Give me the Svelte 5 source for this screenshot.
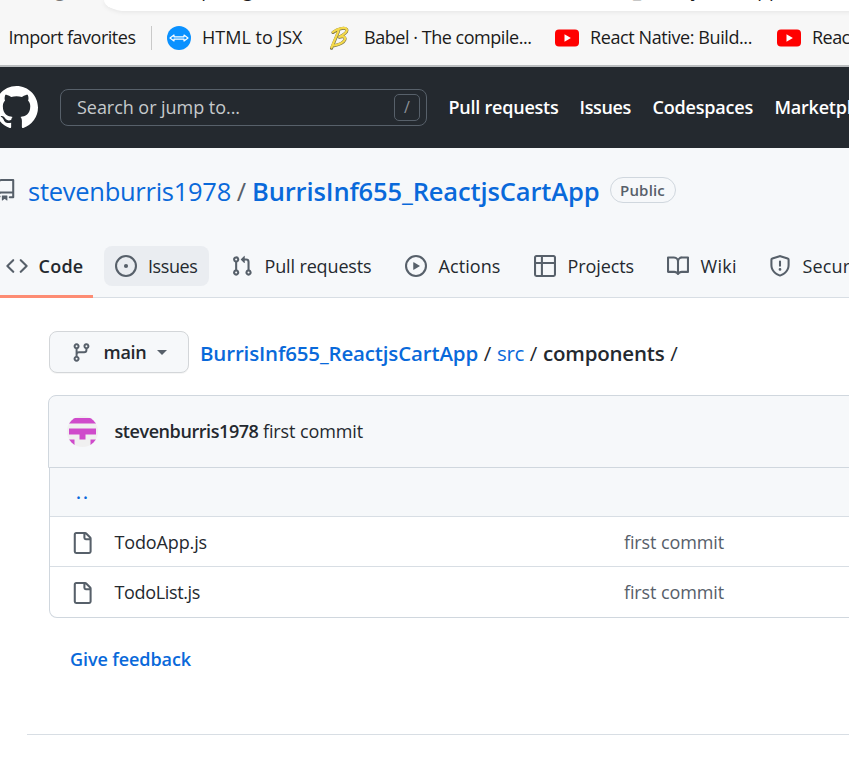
<script>
  // Spreads a label's letters so that it fills exactly the given width.
  function fit(node, width) {
    const natural = node.getBoundingClientRect().width;
    const count = node.textContent.length;
    node.style.letterSpacing = `${(width - natural) / count}px`;
    node.style.width = `${width}px`;
  }

  const favorites = [
    { kind: 'jsx', label: 'HTML to JSX', text: 100.5, slot: 162 },
    { kind: 'babel', label: 'Babel · The compile...', text: 167.5, slot: 226 },
    { kind: 'youtube', label: 'React Native: Build...', text: 162, slot: 222 },
    { kind: 'youtube', label: 'React Native', text: 98, slot: 200 }
  ];

  const links = [
    { label: 'Pull requests', text: 110, slot: 131 },
    { label: 'Issues', text: 51.5, slot: 73 },
    { label: 'Codespaces', text: 100.5, slot: 122 },
    { label: 'Marketplace', text: 106, slot: 120 }
  ];

  const tabs = [
    {
      label: 'Code', text: 45, slot: 99, state: 'current',
      d: 'M4.72 3.22a.75.75 0 011.06 1.06L2.06 8l3.72 3.72a.75.75 0 11-1.06 1.06L.47 8.53a.75.75 0 010-1.06l4.25-4.25zm6.56 0a.75.75 0 10-1.06 1.06L13.94 8l-3.72 3.72a.75.75 0 101.06 1.06l4.25-4.25a.75.75 0 000-1.06l-4.25-4.25z'
    },
    {
      label: 'Issues', text: 49.5, slot: 105, state: 'hovered',
      d: 'M8 9.5a1.5 1.5 0 100-3 1.5 1.5 0 000 3zM8 0a8 8 0 100 16A8 8 0 008 0zM1.5 8a6.5 6.5 0 1113 0 6.5 6.5 0 01-13 0z'
    },
    {
      label: 'Pull requests', text: 107, slot: 163,
      d: 'M7.177 3.073L9.573.677A.25.25 0 0110 .854v4.792a.25.25 0 01-.427.177L7.177 3.427a.25.25 0 010-.354zM3.75 2.5a.75.75 0 100 1.5.75.75 0 000-1.5zm-2.25.75a2.25 2.25 0 113 2.122v5.256a2.251 2.251 0 11-1.5 0V5.372A2.25 2.25 0 011.5 3.25zM11 2.5h-1V4h1a1 1 0 011 1v5.628a2.251 2.251 0 101.5 0V5A2.5 2.5 0 0011 2.5zm1 10.25a.75.75 0 111.5 0 .75.75 0 01-1.5 0zM3.75 12a.75.75 0 100 1.5.75.75 0 000-1.5z'
    },
    {
      label: 'Actions', text: 62, slot: 118,
      d: 'M1.5 8a6.5 6.5 0 1113 0 6.5 6.5 0 01-13 0zM8 0a8 8 0 100 16A8 8 0 008 0zM6.379 5.227A.25.25 0 006 5.442v5.117a.25.25 0 00.379.214l4.264-2.559a.25.25 0 000-.428L6.379 5.227z'
    },
    {
      label: 'Projects', text: 66.5, slot: 122,
      d: 'M0 1.75C0 .784.784 0 1.75 0h12.5C15.216 0 16 .784 16 1.75v12.5A1.75 1.75 0 0114.25 16H1.75A1.75 1.75 0 010 14.25V1.75zM1.5 6.5v7.75c0 .138.112.25.25.25H5v-8H1.5zM5 5V1.5H1.75a.25.25 0 00-.25.25V5H5zm1.5 1.5v8h7.75a.25.25 0 00.25-.25V6.5h-8zm8-1.5V1.75a.25.25 0 00-.25-.25H6.5V5h8z'
    },
    {
      label: 'Wiki', text: 36.5, slot: 91,
      d: 'M0 1.75A.75.75 0 01.75 1h4.253c1.227 0 2.317.59 3 1.501A3.744 3.744 0 0111.006 1h4.245a.75.75 0 01.75.75v10.5a.75.75 0 01-.75.75h-4.507a2.25 2.25 0 00-1.591.659l-.622.621a.75.75 0 01-1.06 0l-.622-.621A2.25 2.25 0 005.258 13H.75a.75.75 0 01-.75-.75V1.75zm8.755 3a2.25 2.25 0 012.25-2.25H14.5v9h-3.757c-.71 0-1.4.201-1.992.572l.004-7.322zm-1.504 7.324l.004-5.073-.002-2.253A2.25 2.25 0 005.003 2.5H1.5v9h3.757a3.75 3.75 0 011.994.574z'
    },
    {
      label: 'Security', text: 68, slot: 123,
      d: 'M7.467.133a1.75 1.75 0 011.066 0l5.25 1.68A1.75 1.75 0 0115 3.48V7c0 1.566-.32 3.182-1.303 4.682-.983 1.498-2.585 2.813-5.032 3.855a1.7 1.7 0 01-1.33 0c-2.447-1.042-4.049-2.357-5.032-3.855C1.32 10.182 1 8.566 1 7V3.48a1.75 1.75 0 011.217-1.667l5.25-1.68zm.61 1.429a.25.25 0 00-.153 0l-5.25 1.68a.25.25 0 00-.174.238V7c0 1.358.275 2.666 1.057 3.86.784 1.194 2.121 2.34 4.366 3.297a.2.2 0 00.154 0c2.245-.956 3.582-2.104 4.366-3.298C13.225 9.666 13.5 8.36 13.5 7V3.48a.25.25 0 00-.174-.237l-5.25-1.68zM9 10.5a1 1 0 11-2 0 1 1 0 012 0zm-.25-5.75a.75.75 0 10-1.5 0v3a.75.75 0 001.5 0v-3z'
    }
  ];

  const files = [
    { name: 'TodoApp.js', text: 92.5 },
    { name: 'TodoList.js', text: 85.5 }
  ];
</script>

<div class="screen">
  <div class="browser">
    <div class="address-row">
      <div class="tab-title"><span>g</span></div>
      <div class="address"><span class="fit" use:fit={606}>https://github.com/stevenburris1978/BurrisInf655_ReactjsCartApp</span></div>
    </div>
    <div class="favorites">
      <div class="import"><span class="fit" use:fit={127}>Import favorites</span></div>
      {#each favorites as f}
        <div class="favorite" style:width="{f.slot}px">
          {#if f.kind === 'jsx'}
            <svg class="fav" viewBox="0 0 24 24" width="24" height="24">
              <circle cx="12" cy="12" r="12" fill="#0a91ff" />
              <path d="M3 12l4-3v1.8h10V9l4 3-4 3v-1.8H7V15z" fill="none" stroke="#fff" stroke-width="1.2" stroke-linejoin="round" />
            </svg>
          {:else if f.kind === 'babel'}
            <svg class="fav" viewBox="0 0 24 24" width="24" height="24">
              <g fill="none" stroke-linecap="round" stroke-linejoin="round">
                <path d="M4 6.500C8.500 3 15.500 1 17.500 3.300c1.800 2.200-3 5.800-7.300 7.900 4-1.300 6.700-.1 5.600 2.700-1.400 3.300-6.500 5-10.800 5.900M9.500 5.500L2.500 22.300" stroke="#777044" stroke-width="3" />
                <path d="M4 6C8.500 2.500 15.500.7 17.500 3c1.800 2.200-3 5.800-7.300 7.900 4-1.300 6.700-.1 5.600 2.700-1.400 3.300-6.500 5-10.800 5.900M9.500 5L2.500 21.500" stroke="#f5da4b" stroke-width="2.200" />
              </g>
            </svg>
          {:else}
            <svg class="fav" viewBox="0 0 24 24" width="24" height="24">
              <rect y="3.500" width="24" height="17" rx="4" fill="#f00" />
              <path d="M9.500 8.300v7.400l6.400-3.700z" fill="#fff" />
            </svg>
          {/if}
          <span class="fit" use:fit={f.text}>{f.label}</span>
        </div>
      {/each}
    </div>
  </div>

  <header>
    <svg class="logo" viewBox="0 0 16 16" width="43" height="43" fill="#fff">
      <path d="M8 0C3.580 0 0 3.580 0 8c0 3.540 2.290 6.530 5.470 7.590.4.070.55-.17.55-.38 0-.19-.01-.82-.01-1.490-2.010.37-2.530-.49-2.690-.94-.09-.23-.48-.94-.82-1.130-.28-.15-.68-.52-.01-.53.630-.01 1.080.58 1.230.82.720 1.210 1.870.87 2.330.66.070-.52.280-.87.510-1.070-1.780-.2-3.640-.89-3.640-3.950 0-.87.310-1.590.82-2.150-.08-.2-.36-1.020.080-2.120 0 0 .67-.21 2.200.82.640-.18 1.320-.27 2-.27s1.360.090 2 .27c1.530-1.040 2.200-.82 2.200-.82.440 1.100.16 1.920.080 2.120.510.56.82 1.270.82 2.150 0 3.070-1.870 3.750-3.650 3.950.290.25.540.73.540 1.480 0 1.070-.01 1.930-.01 2.200 0 .21.150.46.550.38A8.013 8.013 0 0016 8c0-4.420-3.580-8-8-8z" />
    </svg>
    <div class="search">
      <span class="fit" use:fit={163}>Search or jump to...</span>
      <span class="key">/</span>
    </div>
    <nav>
      {#each links as l}
        <div style:width="{l.slot}px"><span class="fit" use:fit={l.text}>{l.label}</span></div>
      {/each}
    </nav>
  </header>

  <section class="repo">
    <div class="title">
      <svg viewBox="0 0 16 16" width="22" height="22" fill="#57606a">
        <path fill-rule="evenodd" d="M2 2.500A2.500 2.500 0 014.500 0h8.750a.75.75 0 01.75.75v12.500a.75.75 0 01-.75.75h-2.500a.75.75 0 110-1.500h1.750v-2h-8a1 1 0 00-.714 1.700.75.75 0 01-1.072 1.050A2.495 2.495 0 012 11.500v-9zm10.500-1V9h-8c-.356 0-.694.074-1 .208V2.500a1 1 0 011-1h8zM5 12.250v3.250a.25.25 0 00.4.2l1.450-1.087a.25.25 0 01.3 0L8.600 15.700a.25.25 0 00.4-.2v-3.250a.25.25 0 00-.25-.25h-3.500a.25.25 0 00-.25.25z" />
      </svg>
      <span class="fit owner" use:fit={203}>stevenburris1978</span>
      <span class="slash">/</span>
      <span class="fit name" use:fit={347.5}>BurrisInf655_ReactjsCartApp</span>
      <span class="badge"><span class="fit" use:fit={45}>Public</span></span>
    </div>
    <div class="tabs">
      {#each tabs as t}
        <div class="tab {t.state ?? ''}" style:width="{t.slot}px">
          <svg viewBox="0 0 16 16" width="22" height="22" fill="#57606a"><path fill-rule="evenodd" d={t.d} /></svg>
          <span class="fit" use:fit={t.text}>{t.label}</span>
        </div>
      {/each}
    </div>
  </section>

  <main>
    <div class="path">
      <div class="branch">
        <svg viewBox="0 0 16 16" width="21" height="21" fill="#57606a">
          <path fill-rule="evenodd" d="M11.750 2.500a.75.75 0 100 1.500.75.75 0 000-1.500zm-2.250.75a2.250 2.250 0 113 2.122V6A2.500 2.500 0 0110 8.500H6a1 1 0 00-1 1v1.128a2.251 2.251 0 11-1.500 0V5.372a2.250 2.250 0 111.500 0v1.836A2.492 2.492 0 016 7h4a1 1 0 001-1v-.628A2.250 2.250 0 019.500 3.250zM4.250 12a.75.75 0 100 1.500.75.75 0 000-1.500zM3.500 3.250a.75.75 0 111.500 0 .75.75 0 01-1.500 0z" />
        </svg>
        <span class="fit" use:fit={43}>main</span>
        <i class="caret"></i>
      </div>
      <div class="crumbs">
        <b class="fit link" use:fit={278}>BurrisInf655_ReactjsCartApp</b>
        <span class="sep">/</span>
        <span class="fit link" use:fit={27}>src</span>
        <span class="sep">/</span>
        <b class="fit" use:fit={121.5}>components</b>
        <span class="sep">/</span>
      </div>
    </div>

    <div class="commit">
      <svg class="avatar" viewBox="0 0 31 31" width="31" height="31">
        <defs><clipPath id="round"><circle cx="15.500" cy="15.500" r="15.500" /></clipPath></defs>
        <g clip-path="url(#round)">
          <rect width="31" height="31" fill="#f0f0f0" />
          <path d="M2 2h27v5.500H2zM2 12.500h27v6H18.500v5h-6v-5H2zM2 23.500h5.500v6H2zM23.500 23.500H29v6h-5.500z" fill="#cf4bcb" />
        </g>
      </svg>
      <b class="fit" use:fit={144}>stevenburris1978</b>
      <span class="fit" use:fit={100}>first commit</span>
    </div>
    <div class="files">
      <div class="row up"><span>..</span></div>
      {#each files as f}
        <div class="row">
          <svg viewBox="0 0 16 16" width="22" height="22" fill="#57606a">
            <path fill-rule="evenodd" d="M3.750 1.500a.25.25 0 00-.25.25v12.500c0 .138.112.25.25.25h9.500a.25.25 0 00.25-.25V6H10.750A1.750 1.750 0 019 4.250V1.500H3.750zm6.750.062V4.250c0 .138.112.25.25.25h2.688a.252.252 0 00-.011-.013l-2.914-2.914a.272.272 0 00-.013-.011zM2 1.750C2 .784 2.784 0 3.750 0h6.586c.464 0 .909.184 1.237.513l2.914 2.914c.329.328.513.773.513 1.237v9.586A1.750 1.750 0 0113.250 16h-9.500A1.750 1.750 0 012 14.250V1.750z" />
          </svg>
          <div class="file"><span class="fit" use:fit={f.text}>{f.name}</span></div>
          <span class="fit message" use:fit={100}>first commit</span>
        </div>
      {/each}
    </div>
    <div class="feedback"><span class="fit" use:fit={121}>Give feedback</span></div>
  </main>
  <footer></footer>
</div>

<style>
  :global(body) { overflow: hidden; }
  .screen {
    width: 849px;
    height: 784px;
    overflow: hidden;
    background: #fff;
    font: 18px/24px "Open Sans", "Noto Sans", sans-serif;
    color: #24292f;
  }
  .screen * { box-sizing: border-box; white-space: nowrap; }
  svg { display: block; flex: none; }
  .fit { display: inline-block; flex: none; }
  b { font-weight: 600; }

  .browser {
    height: 67px;
    background: #f7f7f7;
    border-bottom: 2px solid #babdbf;
    color: #1b1b1b;
    overflow: hidden;
  }
  .address-row { height: 11px; display: flex; }
  .tab-title { flex: none; width: 104px; height: 3px; overflow: hidden; color: #777; padding-left: 55px; }
  .tab-title span { display: block; margin-top: -22px; }
  .address {
    flex: none;
    display: flex;
    align-items: flex-start;
    width: 780px;
    height: 11px;
    padding-left: 71px;
    background: #fff;
    font-size: 18.500px;
    border-bottom-left-radius: 22px 11px;
    box-shadow: 0 1px 5px rgba(0, 0, 0, .08);
  }
  .address span { margin-top: -22px; }
  .favorites { display: flex; align-items: center; height: 54px; }
  .favorites .fit { margin-top: -2px; }
  .import {
    flex: none;
    display: flex;
    align-items: center;
    width: 152px;
    height: 24px;
    padding-left: 8.500px;
    border-right: 1px solid #c9c9c9;
    margin-right: 15px;
  }
  .favorite { display: flex; flex: none; align-items: center; }
  .fav { margin-right: 11px; }

  header {
    display: flex;
    align-items: center;
    height: 81px;
    background: #24292f;
  }
  .logo { margin: -1px 0 0 -5px; }
  .search {
    flex: none;
    display: flex;
    justify-content: space-between;
    align-items: center;
    width: 367px;
    height: 37px;
    margin-left: 22px;
    padding: 0 6px 0 16px;
    border: 1px solid #57606a;
    border-radius: 8px;
    color: #c6c9cc;
  }
  .search .fit { margin-top: -2px; }
  .key {
    width: 26px;
    height: 27px;
    border: 1px solid #57606a;
    border-radius: 5px;
    color: #8b9198;
    font-size: 16px;
    text-align: center;
  }
  nav { display: flex; margin: -2px 0 0 21.500px; color: #fff; font-weight: 600; }
  nav div { flex: none; }

  .repo { height: 150px; background: #f6f8fa; border-bottom: 1px solid #d8dee4; }
  .title { display: flex; align-items: center; height: 86px; font-size: 25.500px; line-height: 34px; }
  .title svg { margin: -2px 11px 0 -5px; }
  .owner, .name, .link, .up, .feedback { color: #0969da; }
  .name { font-weight: 600; }
  .slash { width: 21px; text-align: center; color: #57606a; }
  .badge {
    height: 26px;
    width: 66px;
    margin: -3px 0 0 10px;
    border: 1px solid #d0d7de;
    border-radius: 13px;
    color: #57606a;
    font-size: 15px;
    font-weight: 600;
    line-height: 24px;
    text-align: center;
  }
  .tabs { display: flex; gap: 11px; height: 64px; margin-left: -6px; }
  .tab {
    display: flex;
    flex: none;
    align-items: center;
    gap: 11.500px;
    height: 40px;
    margin-top: 12px;
    padding-left: 11px;
    border-radius: 8px;
  }
  .hovered { gap: 11px; background: #eaedf1; }
  .current {
    height: 52px;
    gap: 11px;
    padding: 0 0 9px 11.500px;
    border-bottom: 3px solid #fd8c73;
    border-radius: 0;
    font-weight: 600;
  }

  main { padding: 33px 0 0 48px; }
  .path { display: flex; align-items: center; height: 42px; }
  .branch {
    flex: none;
    display: flex;
    align-items: center;
    width: 140px;
    height: 42px;
    margin: 0 11px 0 1px;
    padding-left: 21px;
    background: #f6f8fa;
    border: 1px solid #d3d6d9;
    border-radius: 8px;
    box-shadow: 0 1px 0 rgba(27, 31, 36, .04);
    font-weight: 600;
  }
  .branch .fit { margin-left: 11.500px; }
  .caret { margin: 1px 0 0 10px; border: 5.500px solid transparent; border-top-color: #57606a; border-bottom: 0; }
  .crumbs { display: flex; font-size: 20.500px; line-height: 28px; padding-top: 1px; }
  .sep { width: 19px; text-align: center; }

  .commit {
    display: flex;
    align-items: center;
    width: 840px;
    height: 73px;
    margin-top: 22px;
    padding-left: 17.500px;
    background: #f6f8fa;
    border: 1px solid #d0d7de;
    border-radius: 8px 8px 0 0;
  }
  .commit .fit { margin-top: -2px; }
  .commit b { margin: 0 4.500px 0 17px; }
  .files {
    width: 840px;
    margin-left: 1px;
    border: 1px solid #d0d7de;
    border-top: 0;
    border-radius: 0 0 8px 8px;
    overflow: hidden;
  }
  .row {
    display: flex;
    align-items: center;
    height: 50px;
    padding-left: 21px;
    border-top: 1px solid #d8dee4;
  }
  .row:last-child { height: 51px; }
  .row svg { margin-top: 2px; }
  .up { height: 48px; padding-left: 26px; border-top: 0; background: #f6f8fa; font-weight: 600; letter-spacing: 2px; }
  .file { flex: none; width: 531px; padding-left: 21.500px; }
  .message { color: #57606a; }
  .feedback { margin-top: 29px; padding-left: 22px; font-weight: 600; }
  footer { margin: 63px 0 0 27px; border-top: 1px solid #d8dee4; }
</style>
